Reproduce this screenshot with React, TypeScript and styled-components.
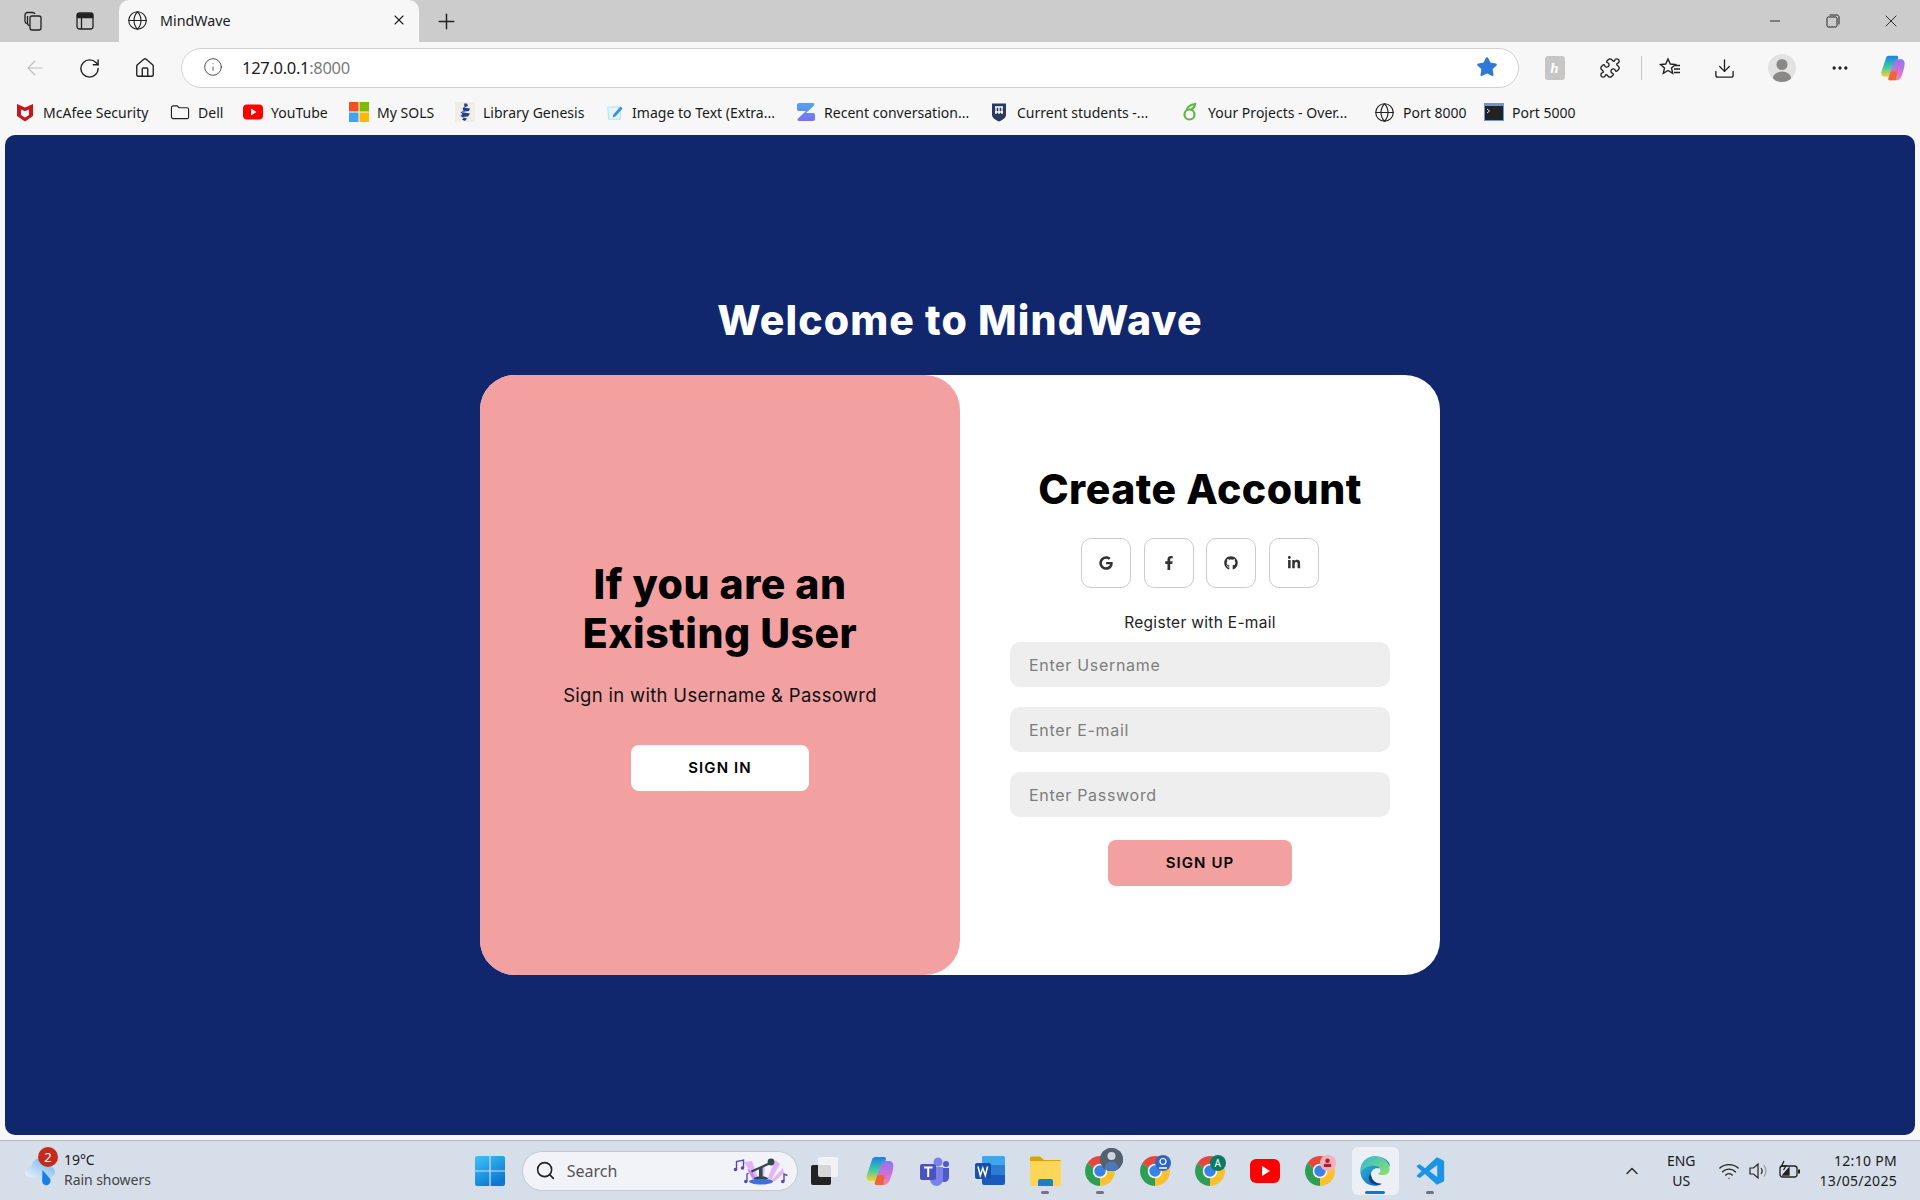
import React from 'react'
import styled, { createGlobalStyle } from 'styled-components'
import { FaFacebookF, FaGithub, FaGoogle, FaLinkedinIn } from 'react-icons/fa'
import {
  ArrowLeft,
  ChevronUp,
  Download,
  Ellipsis,
  Globe,
  Home,
  Info,
  Minus,
  Plus,
  Puzzle,
  RotateCw,
  Search,
  Star,
  Wifi,
  X,
} from 'lucide-react'

const UI_FONT = '"Noto Sans", "Open Sans", sans-serif'
const PAGE_FONT = 'Inter, "Noto Sans", sans-serif'

const GlobalStyle = createGlobalStyle`
  html, body {
    margin: 0;
    padding: 0;
    background: #f7f7f7;
  }
  * {
    box-sizing: border-box;
  }
`

const Chrome = () => (
  <svg width="30" height="30" viewBox="0 0 24 24">
    <path d="M12 12L1.61 6A12 12 0 0 1 22.39 6Z" fill="#e8453c" />
    <path d="M12 12L22.39 6A12 12 0 0 1 12 24Z" fill="#fbc02d" />
    <path d="M12 12L12 24A12 12 0 0 1 1.61 6Z" fill="#2e9e54" />
    <circle cx="12" cy="12" r="5.8" fill="#fff" />
    <circle cx="12" cy="12" r="4.6" fill="#3b82e8" />
  </svg>
)

const CopilotLogo = ({ size }: { size: number }) => (
  <svg width={size} height={size} viewBox="0 0 24 24">
    <defs>
      <linearGradient id={`cpa${size}`} x1="0.45" y1="0" x2="0.45" y2="1">
        <stop offset="0" stopColor="#1f7fe6" />
        <stop offset="0.5" stopColor="#35c8a8" />
        <stop offset="1" stopColor="#f2d23a" />
      </linearGradient>
      <linearGradient id={`cpb${size}`} x1="0.5" y1="0" x2="0.5" y2="1">
        <stop offset="0" stopColor="#8a78ee" />
        <stop offset="0.55" stopColor="#d06fd8" />
        <stop offset="1" stopColor="#f58aa8" />
      </linearGradient>
    </defs>
    <path d="M8.5 1.5H15c1.2 0 1.8.8 1.4 2L12 17c-.6 1.8-1.6 2.5-3.2 2.5H5c-2.400 0-3.600-2-3-4L6 3.500C6.400 2.200 7.200 1.500 8.500 1.500Z" fill={`url(#cpa${size})`} />
    <path d="M16.500 4.500H19c1.800 0 3 1.500 3 3.500 0 3-1 6.500-2.200 9.500-.8 3-2.300 5-4.800 5H9.500c-1.200 0-1.700-.8-1.300-2L12.500 8c.6-2.200 2-3.500 4-3.500Z" fill={`url(#cpb${size})`} />
    <path d="M9.500 22.500c-1.200 0-1.800-.8-1.300-2l2-5.500h5.300l-1 7.500Z" fill="#f0643c" />
  </svg>
)

const Edge = () => (
  <svg width="32" height="32" viewBox="0 0 24 24">
    <defs>
      <linearGradient id="edgeA" x1="0.1" y1="0.2" x2="0.8" y2="1">
        <stop offset="0" stopColor="#2fb4d8" />
        <stop offset="1" stopColor="#0c5fb4" />
      </linearGradient>
      <linearGradient id="edgeB" x1="0" y1="0" x2="1" y2="0.8">
        <stop offset="0" stopColor="#30b8d8" />
        <stop offset="1" stopColor="#86e070" />
      </linearGradient>
    </defs>
    <path d="M12 1C5.500 1 1 6 1 12c0 6 4.500 11 10.500 11 2.500 0 4-.5 5.500-1.500-4 .5-8-2.500-8-7 0-2.500 2-4.500 4.500-4.500h6c2 0 3.500-.5 3.500-2.500C23 4.500 18 1 12 1Z" fill="url(#edgeA)" />
    <path d="M12 1c6 0 11 4.500 11 9.500 0 3-2.500 4.500-5 4.500-1.500 0-3-.3-4-1 1.500-.5 2-1.500 2-2.500C16 8.500 13 8 10.500 8 6.500 8 3 10 1.500 12.500 1.500 6 6 1 12 1Z" fill="url(#edgeB)" />
    <path d="M9 14.500c0 4.500 4 7.500 8 7-3 1.500-8 .5-9.500-3-.5-1.500 0-3 1.500-4Z" fill="#0b3f86" />
  </svg>
)

const Bookmarks = [
  {
    w: 155,
    label: 'McAfee Security',
    icon: (
      <svg width="20" height="20" viewBox="0 0 20 20">
        <path d="M2 2l8 3.500L18 2v12l-8 5.500L2 14Z" fill="#c8161d" />
        <path d="M6 7.500l4 1.800 4-1.800v5.500l-4 2.500-4-2.500Z" fill="#fff" />
      </svg>
    ),
  },
  {
    w: 73,
    label: 'Dell',
    icon: (
      <svg width="20" height="20" viewBox="0 0 21 20" fill="none" stroke="#222" strokeWidth="1.2">
        <path d="M1.500 5.500c0-1 .7-2 2-2h4l2 2h8.500c1 0 1.500.7 1.500 1.500v8.500c0 1-.7 1.500-1.500 1.500h-14c-1.300 0-2.500-.5-2.500-2Z" />
      </svg>
    ),
  },
  {
    w: 106,
    label: 'YouTube',
    icon: (
      <svg width="20" height="20" viewBox="0 0 20 20">
        <rect y="2.500" width="20" height="15" rx="4" fill="#f00" />
        <path d="M8 6.500l5.500 3.500L8 13.500Z" fill="#fff" />
      </svg>
    ),
  },
  {
    w: 106,
    label: 'My SOLS',
    icon: (
      <svg width="20" height="20" viewBox="0 0 20 20">
        <rect width="9.500" height="9.500" fill="#f25022" />
        <rect x="10.500" width="9.500" height="9.500" fill="#7fba00" />
        <rect y="10.500" width="9.500" height="9.500" fill="#40a5f0" />
        <rect x="10.500" y="10.500" width="9.500" height="9.500" fill="#ffb900" />
      </svg>
    ),
  },
  {
    w: 151,
    label: 'Library Genesis',
    icon: (
      <svg width="20" height="20" viewBox="0 0 20 20">
        <rect width="20" height="20" fill="#eeeee6" />
        <path d="M9 1.500h3l1 2.500-4 1.500 6 1-1 2.500-8 1 9 1.500-2 3-6 .5 5 1.500-2 2.500-3-1.500 1.500-1.500-3-2 2-2-2-1.500 3-2-1-2 2-2Z" fill="#23408e" />
      </svg>
    ),
  },
  {
    w: 190,
    label: 'Image to Text (Extra...',
    icon: (
      <svg width="18" height="20" viewBox="0 0 20 20">
        <path d="M2 4.500h11l3 2V18H3Z" fill="#e3f6fd" stroke="#a5e2f5" strokeWidth="1" />
        <path d="M8 13l8-9 2.500 2-8 9-3 1Z" fill="#3d8fe0" />
      </svg>
    ),
  },
  {
    w: 193,
    label: 'Recent conversation...',
    icon: (
      <svg width="20" height="20" viewBox="0 0 20 20">
        <defs>
          <linearGradient id="zap" x1="0" y1="0" x2="0" y2="1">
            <stop offset="0" stopColor="#4aa8f5" />
            <stop offset="1" stopColor="#7c6ff0" />
          </linearGradient>
        </defs>
        <path d="M3 1h14c1.500 0 1.500 1.500 1 2.500L10 11H17c1.500 0 2 .8 2 2v4c0 1.200-.8 2-2 2H3c-1.500 0-2-1.500-1-2.500L10 9H3c-1.200 0-2-.8-2-2V3c0-1.200.8-2 2-2Z" fill="url(#zap)" />
      </svg>
    ),
  },
  {
    w: 191,
    label: 'Current students -...',
    icon: (
      <svg width="20" height="20" viewBox="0 0 20 20">
        <path d="M3 1.500h14V13c0 3-3.500 5-7 6.500C6.500 18 3 16 3 13Z" fill="#2c3a5e" />
        <path d="M6 5h8M6 10h8M7 5v7M10 5v7M13 5v7" stroke="#fff" strokeWidth="1.3" fill="none" />
      </svg>
    ),
  },
  {
    w: 194,
    label: 'Your Projects - Over...',
    icon: (
      <svg width="20" height="20" viewBox="0 0 20 20" fill="none" stroke="#5fb548" strokeWidth="2.2">
        <circle cx="9.500" cy="12.500" r="5" />
        <path d="M7 8c0-3 3-5 8-6-.5 3-2 5-4.500 5.500" />
      </svg>
    ),
  },
  {
    w: 110,
    label: 'Port 8000',
    icon: <Globe size={21} strokeWidth={1.3} color="#222" />,
  },
  {
    w: 100,
    label: 'Port 5000',
    icon: (
      <svg width="20" height="20" viewBox="0 0 20 20">
        <rect y="1" width="20" height="18" fill="#6f93cf" />
        <rect x="1" y="4" width="18" height="14" fill="#222" />
        <path d="M3 7l2.500 2L3 11" stroke="#ddd" strokeWidth="1" fill="none" />
      </svg>
    ),
  },
]

const Shell = styled.div`
  width: 1920px;
  height: 1200px;
  display: flex;
  flex-direction: column;
  overflow: hidden;
  font-family: ${UI_FONT};
  background: #f7f7f7;
  color: #1a1a1a;
`

const TabStrip = styled.div`
  height: 42px;
  flex: none;
  display: flex;
  align-items: center;
  padding-left: 7px;
  background: #cccccc;
`

const StripButton = styled.div<{ $w?: number }>`
  width: ${(p) => p.$w || 52}px;
  height: 42px;
  flex: none;
  display: flex;
  align-items: center;
  justify-content: center;
`

const Tab = styled.div`
  width: 300px;
  height: 42px;
  margin-left: 8px;
  flex: none;
  display: flex;
  align-items: center;
  padding: 0 12px 2px 8px;
  gap: 12px;
  background: #f7f7f7;
  border-radius: 10px 10px 0 0;
  font-size: 14.3px;
`

const TabTitle = styled.span`
  flex: 1;
`

const WindowControls = styled.div`
  margin-left: auto;
  display: flex;
`

const Toolbar = styled.div`
  height: 52px;
  flex: none;
  display: flex;
  align-items: center;
  padding: 0 2px 0 7px;
`

const ToolButton = styled.div<{ $w?: number }>`
  width: ${(p) => p.$w || 55}px;
  height: 40px;
  flex: none;
  display: flex;
  align-items: center;
  justify-content: center;
`

const AddressBar = styled.div`
  flex: 1;
  height: 40px;
  margin: 0 8px 0 9px;
  display: flex;
  align-items: center;
  padding: 0 20px 2px 21px;
  background: #fff;
  border: 1px solid #d2d2d2;
  border-radius: 20px;
`

const Host = styled.span`
  margin-left: 19px;
  font-size: 16.5px;
  letter-spacing: -0.3px;
  color: #1a1a1a;
`

const Port = styled.span`
  color: #7b7b7b;
`

const StarSlot = styled.span`
  margin-left: auto;
  display: flex;
`

const ToolDivider = styled.div`
  width: 1px;
  height: 24px;
  flex: none;
  margin-left: 4px;
  background: #c4c4c4;
`

const ExtensionTile = styled.div`
  width: 20px;
  height: 24px;
  display: flex;
  align-items: center;
  justify-content: center;
  border-radius: 3px;
  background: #c6c6c6;
  color: #fff;
  font-family: "Liberation Serif", serif;
  font-style: italic;
  font-weight: 700;
  font-size: 15px;
`

const Avatar = styled.div`
  width: 28px;
  height: 28px;
  border-radius: 50%;
  background: #e2e2e2;
  overflow: hidden;
  display: flex;
`

const BookmarkBar = styled.div`
  height: 36px;
  flex: none;
  display: flex;
  align-items: center;
  padding-left: 15px;
`

const Bookmark = styled.div<{ $w: number }>`
  width: ${(p) => p.$w}px;
  flex: none;
  display: flex;
  align-items: center;
  gap: 8px;
  font-size: 14px;
  letter-spacing: 0.02px;
  white-space: nowrap;
`

const Viewport = styled.main`
  flex: 1;
  margin: 5px;
  display: flex;
  flex-direction: column;
  align-items: center;
  justify-content: center;
  background: #10266d;
  border-radius: 10px;
  font-family: ${PAGE_FONT};
`

const WelcomeTitle = styled.h1`
  margin: 0 0 30px;
  padding-top: 1px;
  font-size: 41px;
  line-height: 49px;
  font-weight: 800;
  letter-spacing: 1.1px;
  color: #fff;
`

const Card = styled.section`
  width: 960px;
  height: 600px;
  display: flex;
  background: #fff;
  border-radius: 35px;
`

const Panel = styled.div<{ $pink?: boolean }>`
  width: 480px;
  height: 100%;
  display: flex;
  flex-direction: column;
  align-items: center;
  justify-content: center;
  text-align: center;
  border-radius: 35px;
  background: ${(p) => (p.$pink ? '#f3a0a1' : 'transparent')};
`

const PanelHeading = styled.h2`
  margin: 0;
  padding-top: 0.5px;
  font-size: 41px;
  line-height: 49px;
  font-weight: 800;
  letter-spacing: 0.5px;
  color: #000;
`

const PanelText = styled.p`
  margin: 24.5px 0 37px;
  font-size: 18.5px;
  line-height: 26px;
  letter-spacing: 0.3px;
  color: #111;
`

const SocialRow = styled.div`
  display: flex;
  gap: 12.6px;
  margin: 24px 0 25.5px;
`

const SocialButton = styled.a`
  width: 50px;
  height: 50px;
  display: flex;
  align-items: center;
  justify-content: center;
  border: 1px solid #ccc;
  border-radius: 10px;
  font-size: 14px;
  color: #333;
`

const RegisterText = styled.span`
  margin-bottom: 9px;
  font-size: 15.5px;
  line-height: 20px;
  letter-spacing: 0.3px;
  color: #222;
`

const Field = styled.input`
  width: 380px;
  height: 45px;
  margin-bottom: 20px;
  padding: 1px 19px 0;
  border: none;
  outline: none;
  border-radius: 10px;
  background: #eeeeee;
  font-family: ${PAGE_FONT};
  font-size: 16px;
  letter-spacing: 0.7px;
  &::placeholder {
    color: #7d7d7d;
    opacity: 1;
  }
`

const ActionButton = styled.button<{ $pink?: boolean }>`
  width: ${(p) => (p.$pink ? 184 : 178)}px;
  height: 46px;
  margin-top: ${(p) => (p.$pink ? 3 : 0)}px;
  padding: 0 0 1px;
  border: none;
  border-radius: 8px;
  background: ${(p) => (p.$pink ? '#f3a0a1' : '#fff')};
  color: #000;
  font-family: ${PAGE_FONT};
  font-size: 15px;
  font-weight: 600;
  letter-spacing: 1.1px;
`

const Taskbar = styled.footer`
  height: 60px;
  flex: none;
  display: grid;
  grid-template-columns: 1fr auto 1fr;
  align-items: center;
  background: #d6deea;
  border-top: 1px solid #b4b8c0;
`

const Weather = styled.div`
  position: relative;
  display: flex;
  align-items: center;
  gap: 9px;
  padding-left: 24px;
`

const WeatherBadge = styled.span`
  position: absolute;
  left: 38px;
  top: -5px;
  width: 20px;
  height: 20px;
  display: flex;
  align-items: center;
  justify-content: center;
  border-radius: 50%;
  background: #c42b1c;
  color: #fff;
  font-size: 13px;
`

const WeatherText = styled.div`
  display: flex;
  flex-direction: column;
  margin-top: -2px;
  font-size: 14px;
  line-height: 20px;
  letter-spacing: -0.05px;
`

const WeatherNote = styled.span`
  color: #444;
`

const TaskCenter = styled.div`
  display: flex;
  align-items: center;
`

const StartSlot = styled.div`
  width: 55px;
  margin-right: 4.5px;
  display: flex;
  justify-content: center;
`

const SearchPill = styled.div`
  width: 276px;
  height: 40px;
  display: flex;
  align-items: center;
  gap: 11px;
  padding: 0 6px 0 12px;
  background: #f1f3f9;
  border: 1px solid #c4c9d2;
  border-radius: 20px;
  font-size: 16px;
  color: #555;
`

const SearchArt = styled.span`
  margin-left: auto;
  display: flex;
`

const TaskSlot = styled.div<{ $active?: boolean }>`
  position: relative;
  width: 55px;
  height: 48px;
  display: flex;
  align-items: center;
  justify-content: center;
  border-radius: 6px;
  &::before {
    content: '';
    position: absolute;
    inset: 0 4px;
    border-radius: 6px;
    background: ${(p) => (p.$active ? 'rgba(255,255,255,0.55)' : 'transparent')};
  }
  > svg {
    position: relative;
  }
`

const RunDot = styled.span<{ $active?: boolean }>`
  position: absolute;
  left: 50%;
  bottom: 1px;
  width: ${(p) => (p.$active ? 20 : 8)}px;
  height: 3px;
  border-radius: 2px;
  transform: translateX(-50%);
  background: ${(p) => (p.$active ? '#0f78d4' : '#6f747c')};
`

const ChromeBadge = styled.span<{ $bg: string; $large?: boolean }>`
  position: absolute;
  top: ${(p) => (p.$large ? 1 : 8)}px;
  right: ${(p) => (p.$large ? 5 : 12)}px;
  width: ${(p) => (p.$large ? 23 : 16)}px;
  height: ${(p) => (p.$large ? 23 : 16)}px;
  display: flex;
  align-items: center;
  justify-content: center;
  overflow: hidden;
  border-radius: 50%;
  background: ${(p) => p.$bg};
  color: #fff;
  font-size: 10px;
`

const Tray = styled.div`
  display: flex;
  align-items: center;
  justify-content: flex-end;
  padding-right: 23px;
  color: #1a1a1a;
`

const TrayLang = styled.div`
  margin: 0 22px 0 25px;
  text-align: center;
  font-size: 14px;
  line-height: 20px;
`

const TrayIcons = styled.div`
  display: flex;
  align-items: center;
  gap: 8px;
  margin-right: 18px;
`

const Clock = styled.div`
  text-align: right;
  font-size: 14px;
  line-height: 20px;
  letter-spacing: 0.3px;
`

const App: React.FC = () => {
  return (
    <Shell>
      <GlobalStyle />
      <TabStrip>
        <StripButton>
          <svg width="22" height="22" viewBox="0 0 22 22" fill="none" stroke="#222" strokeWidth="1.3">
            <rect x="8" y="6" width="11" height="14" rx="2" />
            <path d="M8 16c-1.500-.5-2.500-1-2.500-2.500V6M5.500 14C4 13.500 3 13 3 11.500V5c0-1.500 1-2.500 2.500-2.500h5c1 0 2 .5 2.500 1.500" />
          </svg>
        </StripButton>
        <StripButton>
          <svg width="20" height="20" viewBox="0 0 20 20" fill="none" stroke="#222" strokeWidth="1.3">
            <rect x="2" y="2" width="16" height="16" rx="2.500" />
            <path d="M2.500 3h15v3.500h-15ZM6.500 6.500V18" fill="#222" />
          </svg>
        </StripButton>
        <Tab>
          <Globe size={21} strokeWidth={1.3} color="#222" />
          <TabTitle>MindWave</TabTitle>
          <X size={16} strokeWidth={1.7} color="#222" />
        </Tab>
        <StripButton $w={54}>
          <Plus size={25} strokeWidth={1.4} color="#222" />
        </StripButton>
        <WindowControls>
          <StripButton $w={58}>
            <Minus size={16} strokeWidth={1.4} color="#222" />
          </StripButton>
          <StripButton $w={58}>
            <svg width="14" height="14" viewBox="0 0 14 14" fill="none" stroke="#222" strokeWidth="1">
              <rect x="1" y="3" width="10" height="10" rx="1.500" />
              <path d="M3.500 1h7.500c1.200 0 2 .8 2 2v7.500" />
            </svg>
          </StripButton>
          <StripButton $w={58}>
            <X size={20} strokeWidth={1.1} color="#222" />
          </StripButton>
        </WindowControls>
      </TabStrip>

      <Toolbar>
        <ToolButton>
          <ArrowLeft size={24} strokeWidth={1.1} color="#bdbdbd" />
        </ToolButton>
        <ToolButton>
          <RotateCw size={23} strokeWidth={1.5} color="#222" />
        </ToolButton>
        <ToolButton>
          <Home size={22} strokeWidth={1.5} color="#222" />
        </ToolButton>
        <AddressBar>
          <Info size={20} strokeWidth={1.1} color="#444" />
          <Host>
            127.0.0.1<Port>:8000</Port>
          </Host>
          <StarSlot>
            <Star size={22} fill="#2f78d8" color="#2f78d8" strokeWidth={1.5} />
          </StarSlot>
        </AddressBar>
        <ToolButton>
          <ExtensionTile>h</ExtensionTile>
        </ToolButton>
        <ToolButton>
          <Puzzle size={22} strokeWidth={1.5} color="#222" />
        </ToolButton>
        <ToolDivider />
        <ToolButton>
          <svg width="24" height="24" viewBox="0 0 24 24" fill="none" stroke="#222" strokeWidth="1.4">
            <path d="M10 3l2.300 5 5.200.5-4 3.500 1.200 5.300L10 14.500l-4.700 2.800L6.500 12l-4-3.500L7.700 8Z" />
            <path d="M17 9.500h5M16 13h6M16 16.500h6" />
          </svg>
        </ToolButton>
        <ToolButton>
          <Download size={23} strokeWidth={1.4} color="#222" />
        </ToolButton>
        <ToolButton $w={60}>
          <Avatar>
            <svg width="28" height="28" viewBox="0 0 28 28">
              <circle cx="14" cy="10.500" r="5.500" fill="#8a8886" />
              <ellipse cx="14" cy="24" rx="9" ry="6.500" fill="#8a8886" />
            </svg>
          </Avatar>
        </ToolButton>
        <ToolButton>
          <Ellipsis size={20} strokeWidth={2} color="#222" />
        </ToolButton>
        <ToolButton $w={51}>
          <CopilotLogo size={28} />
        </ToolButton>
      </Toolbar>

      <BookmarkBar>
        {Bookmarks.map((b) => (
          <Bookmark key={b.label} $w={b.w}>
            {b.icon}
            {b.label}
          </Bookmark>
        ))}
      </BookmarkBar>

      <Viewport>
        <WelcomeTitle>Welcome to MindWave</WelcomeTitle>
        <Card>
          <Panel $pink>
            <PanelHeading>
              If you are an
              <br />
              Existing User
            </PanelHeading>
            <PanelText>Sign in with Username &amp; Passowrd</PanelText>
            <ActionButton>SIGN IN</ActionButton>
          </Panel>
          <Panel>
            <PanelHeading>Create Account</PanelHeading>
            <SocialRow>
              <SocialButton>
                <FaGoogle />
              </SocialButton>
              <SocialButton>
                <FaFacebookF />
              </SocialButton>
              <SocialButton>
                <FaGithub />
              </SocialButton>
              <SocialButton>
                <FaLinkedinIn />
              </SocialButton>
            </SocialRow>
            <RegisterText>Register with E-mail</RegisterText>
            <Field placeholder="Enter Username" />
            <Field placeholder="Enter E-mail" />
            <Field placeholder="Enter Password" />
            <ActionButton $pink>SIGN UP</ActionButton>
          </Panel>
        </Card>
      </Viewport>

      <Taskbar>
        <Weather>
          <svg width="31" height="36" viewBox="0 0 31 36">
            <defs>
              <linearGradient id="cloud" x1="0.9" y1="0" x2="0.1" y2="0.9">
                <stop offset="0" stopColor="#6fb0ee" />
                <stop offset="1" stopColor="#dcecfb" />
              </linearGradient>
            </defs>
            <path d="M7 24.500c-3.500 0-6-2.300-6-5.500s2.500-5.500 6-5.500c1.500-5 5-8.500 10-8.500 5.500 0 9 3.500 9.500 8.500 2.500.5 4.500 2.500 4.500 5.300s-2.200 5.700-5 5.700Z" fill="url(#cloud)" />
            <path d="M18.500 17l7.500 8.500c.5 1 .5 2 .5 2.500a4.200 4.200 0 0 1-8.400 0Z" fill="#1580ea" />
          </svg>
          <WeatherBadge>2</WeatherBadge>
          <WeatherText>
            <span>19°C</span>
            <WeatherNote>Rain showers</WeatherNote>
          </WeatherText>
        </Weather>

        <TaskCenter>
          <StartSlot>
            <svg width="30" height="30" viewBox="0 0 30 30">
              <defs>
                <linearGradient id="win" x1="0" y1="0" x2="0.6" y2="1">
                  <stop offset="0" stopColor="#3fc4f5" />
                  <stop offset="1" stopColor="#0a78d4" />
                </linearGradient>
              </defs>
              <path d="M0 2a2 2 0 0 1 2-2h12.400v14.400H0ZM15.600 0H28a2 2 0 0 1 2 2v12.400H15.600ZM0 15.600h14.400V30H2a2 2 0 0 1-2-2ZM15.600 15.600H30V28a2 2 0 0 1-2 2H15.600Z" fill="url(#win)" />
            </svg>
          </StartSlot>
          <SearchPill>
            <Search size={21} strokeWidth={1.8} color="#222" />
            Search
            <SearchArt>
              <svg width="58" height="30" viewBox="0 0 58 30">
                <path d="M22 24L11 6l8-1 7 19ZM34 24l8-20 5 4-9 16ZM27 22l2-12 3 0-1 12ZM38 25l12-13 1 5-9 8Z" fill="#e4b4f4" />
                <path d="M20 24L14 13l5 2 5 9Z" fill="#c88cec" />
                <path d="M18 14.500l19-8.500.8 2-18.800 8.500Z" fill="#31484f" />
                <circle cx="38" cy="6" r="3.400" fill="#31484f" />
                <path d="M26 11h3.600v11H26Z" fill="#2a4a50" />
                <ellipse cx="28" cy="22.500" rx="7" ry="2.200" fill="#2a4a50" />
                <path d="M16 25.500c0-1.500 5-2.500 12-2.500s12 1 12 2.500-5 3-12 3-12-1.500-12-3Z" fill="#3f6ee0" />
                <path d="M3.500 13V5.500l7-1.500v7.500M14 25v-7l1.500-1M51 25v-7l3.500 1.500" stroke="#5648b8" strokeWidth="1.4" fill="none" />
                <circle cx="2.500" cy="13.500" r="1.800" fill="#5648b8" />
                <circle cx="9.500" cy="12" r="1.800" fill="#5648b8" />
                <circle cx="12.800" cy="25.500" r="1.800" fill="#5648b8" />
                <circle cx="49.800" cy="25.500" r="1.800" fill="#5648b8" />
              </svg>
            </SearchArt>
          </SearchPill>
          <TaskSlot>
            <svg width="30" height="30" viewBox="0 0 30 30">
              <rect x="1" y="9" width="20" height="20" rx="2" fill="#222" />
              <rect x="8" y="1" width="20" height="20" rx="2" fill="#f6f6f6" fillOpacity="0.85" />
            </svg>
          </TaskSlot>
          <TaskSlot>
            <CopilotLogo size={32} />
          </TaskSlot>
          <TaskSlot>
            <svg width="32" height="32" viewBox="0 0 32 32">
              <circle cx="19" cy="7" r="4.500" fill="#7b83eb" />
              <circle cx="27" cy="9" r="3" fill="#5059c9" />
              <path d="M21 13h9v9c0 3-2 5-5 5-2 0-4-1-4-3Z" fill="#5059c9" />
              <path d="M11 12h13v12c0 4-3 7-6.500 7S11 28 11 24Z" fill="#7b83eb" />
              <rect x="1" y="9" width="16" height="16" rx="2" fill="#4b53bc" />
              <path d="M5 12.500h8.500M9.200 12.500v9.500" stroke="#fff" strokeWidth="2" />
            </svg>
          </TaskSlot>
          <TaskSlot>
            <svg width="32" height="32" viewBox="0 0 32 32">
              <path d="M9 1h20a2 2 0 0 1 2 2v7H8V2Z" fill="#41a5ee" />
              <rect x="8" y="10" width="23" height="10" fill="#2b7cd3" />
              <path d="M8 20h23v8a2 2 0 0 1-2 2H10a2 2 0 0 1-2-2Z" fill="#185abd" />
              <rect x="1" y="8" width="16" height="16" rx="2" fill="#1a4fa8" />
              <path d="M4 11.500l2.300 9 2.500-7.500 2.500 7.500 2.300-9" stroke="#fff" strokeWidth="1.5" fill="none" />
            </svg>
          </TaskSlot>
          <TaskSlot>
            <svg width="32" height="30" viewBox="0 0 32 30">
              <path d="M1 2a1.500 1.500 0 0 1 1.500-1.500H11L15 4h15.500A1.500 1.500 0 0 1 32 5.500V8H1Z" fill="#d9a400" />
              <path d="M1 5h30a1 1 0 0 1 1 1v22a2 2 0 0 1-2 2H3a2 2 0 0 1-2-2Z" fill="#fcd757" />
              <path d="M9 25a2 2 0 0 1 2-2h11a2 2 0 0 1 2 2v5H9Z" fill="#1a80c8" />
            </svg>
            <RunDot />
          </TaskSlot>
          <TaskSlot>
            <Chrome />
            <ChromeBadge $bg="#4a5a70" $large>
              <svg width="23" height="23" viewBox="0 0 20 20">
                <circle cx="10" cy="10" r="10" fill="#55606e" />
                <circle cx="10" cy="7" r="3.500" fill="#cfd6de" />
                <path d="M4 20c0-6 2-8 6-8s6 2 6 8Z" fill="#4d78b8" />
              </svg>
            </ChromeBadge>
            <RunDot />
          </TaskSlot>
          <TaskSlot>
            <Chrome />
            <ChromeBadge $bg="#2c66c8">
              <svg width="12" height="12" viewBox="0 0 12 12">
                <circle cx="6" cy="4.500" r="3" fill="none" stroke="#fff" strokeWidth="1.2" />
                <path d="M2 11h8" stroke="#fff" strokeWidth="1.5" />
              </svg>
            </ChromeBadge>
          </TaskSlot>
          <TaskSlot>
            <Chrome />
            <ChromeBadge $bg="#0b7a62">A</ChromeBadge>
          </TaskSlot>
          <TaskSlot>
            <svg width="30" height="24" viewBox="0 0 30 24">
              <rect width="30" height="24" rx="6" fill="#f00" />
              <path d="M12 7l8 5-8 5Z" fill="#fff" />
            </svg>
          </TaskSlot>
          <TaskSlot>
            <Chrome />
            <ChromeBadge $bg="#f5b0bc">
              <svg width="9" height="9" viewBox="0 0 10 10">
                <circle cx="5" cy="3" r="2.500" fill="#b01f2e" />
                <rect x="1" y="6.500" width="8" height="3.500" fill="#b01f2e" />
              </svg>
            </ChromeBadge>
          </TaskSlot>
          <TaskSlot $active>
            <Edge />
            <RunDot $active />
          </TaskSlot>
          <TaskSlot>
            <svg width="30" height="30" viewBox="0 0 24 24">
              <path d="M17.500 1l5 2.400c.5.200.8.700.8 1.300v14.600c0 .6-.3 1.100-.8 1.300l-5 2.400-9.500-8.700-4.200 3.200-2-1c-.5-.300-.5-1 0-1.400L5.300 12 1.800 8.900c-.5-.400-.5-1.100 0-1.400l2-1L8 9.700Zm.3 6.200L11.500 12l6.300 4.800Z" fill="#1a94e6" />
            </svg>
            <RunDot />
          </TaskSlot>
        </TaskCenter>

        <Tray>
          <ChevronUp size={20} strokeWidth={1.6} color="#222" />
          <TrayLang>
            ENG
            <br />
            US
          </TrayLang>
          <TrayIcons>
            <Wifi size={22} strokeWidth={1.5} color="#222" />
            <svg width="22" height="22" viewBox="0 0 22 22" fill="none" stroke="#222" strokeWidth="1.2">
              <path d="M2 8h3.500L10 4v14l-4.500-4H2Z" />
              <path d="M13 8c1.300 1.700 1.300 4.300 0 6" />
              <path d="M16 5.500c2.500 3 2.500 8 0 11" stroke="#9a9ea6" />
            </svg>
            <svg width="24" height="22" viewBox="0 0 24 22" fill="none" stroke="#222" strokeWidth="1.3">
              <rect x="2" y="6" width="17" height="11" rx="2.500" />
              <path d="M21 9.500v4" strokeWidth="2" />
              <path d="M5 15l6-7v7Z" fill="#222" />
              <path d="M6 1L3.500 6H8L5.500 10" />
            </svg>
          </TrayIcons>
          <Clock>
            12:10 PM
            <br />
            13/05/2025
          </Clock>
        </Tray>
      </Taskbar>
    </Shell>
  )
}

export default App
